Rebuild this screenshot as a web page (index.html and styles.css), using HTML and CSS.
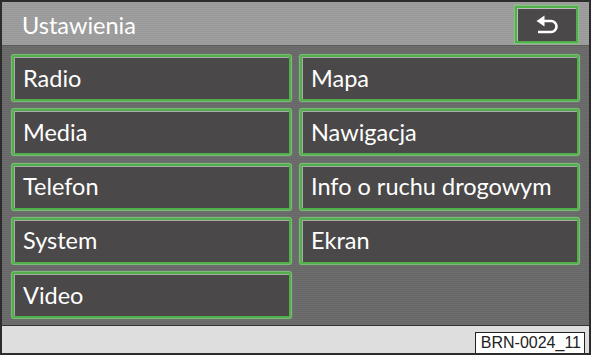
FILE: index.html
```html
<!DOCTYPE html>
<html lang="pl">
	<head>
		<meta charset="UTF-8">
		<meta name="viewport" content="width=device-width, initial-scale=1.0">
		<title>Ustawienia</title>
		<link rel="stylesheet" href="styles.css">
	</head>
    <body>
        <section class="screen">
            <header class="top">
                <h1 class="title">Ustawienia</h1>
                <button type="button" class="back">
                    <svg width="24" height="19" viewBox="0 0 24 19">
                        <path d="M3 17 H16 A5.5 5.5 0 0 0 16 6 H8" fill="none" stroke="#fff" stroke-width="2.6"/>
                        <polygon points="1.5,6 9.5,0.5 9.5,11.5" fill="#fff"/>
                    </svg>
                </button>
            </header>
            <div class="menu">
                <button type="button" class="item">Radio</button>
                <button type="button" class="item">Mapa</button>
                <button type="button" class="item">Media</button>
                <button type="button" class="item">Nawigacja</button>
                <button type="button" class="item">Telefon</button>
                <button type="button" class="item">Info o ruchu drogowym</button>
                <button type="button" class="item">System</button>
                <button type="button" class="item">Ekran</button>
                <button type="button" class="item">Video</button>
            </div>
            <footer class="bottom">
                <span class="code">BRN-0024_11</span>
            </footer>
        </section>
    </body>
</html>
```

FILE: styles.css
```css
body{padding:0; margin:0; background:#fff;}
.screen{
    width:591px; height:355px; box-sizing:border-box;
    border:2px solid #2c2c2c;
    display:flex; flex-direction:column;
    font-family:Lato, "Open Sans", sans-serif;
}
.top{
    height:43px; flex:none; box-sizing:border-box;
    display:flex; align-items:center; justify-content:space-between;
    padding:2px 11px 0 20px;
    background:repeating-linear-gradient(to bottom, #a0a0a0 0 1px, #989898 1px 2px);
}
.title{margin:0; font-size:23.5px; font-weight:normal; color:#fff;}
.back{
    width:63px; height:37px; margin:0; padding:0; cursor:pointer;
    display:flex; align-items:center; justify-content:center;
    background:#4a4848; border:2px solid #52b04a;
    box-shadow:0 0 1px 1px #7fc27a, inset 1px 1px 0 #bdbdbd;
}
.menu{
    flex:1; box-sizing:border-box;
    display:grid; grid-template-columns:279px 279px; grid-template-rows:repeat(5, 46px);
    column-gap:9px; row-gap:8.25px;
    padding:9px 10px 7px 10px;
    border-top:1px solid #5a5a5a;
    background:repeating-linear-gradient(to bottom, #6e6e6e 0 1px, #676767 1px 2px);
}
.item{
    margin:0; padding:0 0 1px 9px; text-align:left; cursor:pointer;
    font-family:inherit; font-size:23.5px; color:#fff;
    background:#4a4848; border:2px solid #52b04a; border-radius:2px;
    box-shadow:0 0 1px 1px #7fc27a, inset 1px 1px 0 #a9a9a9;
}
.bottom{
    height:28px; flex:none; box-sizing:border-box;
    display:flex; align-items:flex-end; justify-content:flex-end;
    padding:0 4px 0 0;
    border-top:1px solid #333;
    background:#dedede;
}
.code{
    height:21px; line-height:19px; box-sizing:border-box; padding:0 3px 0 5px;
    border:1px solid #222; border-bottom:0; background:#fff; color:#222;
    font-family:"Liberation Sans", Arial, sans-serif; font-size:16px;
}
```
